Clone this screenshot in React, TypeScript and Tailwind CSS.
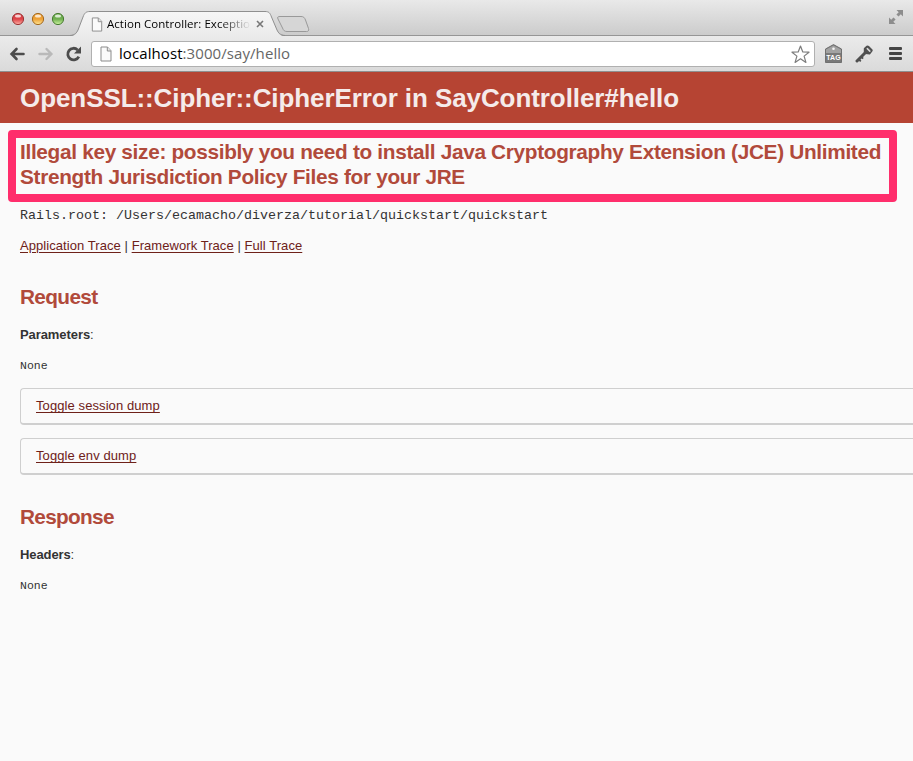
import React from "react";

const SANS = "font-['Liberation_Sans',Arial,sans-serif]";
const MONO = "font-['Liberation_Mono',monospace]";
const CHROME = "font-['Open_Sans',sans-serif]";

function PageIcon({ className }: { className: string }) {
  return (
    <svg className={className} viewBox="0 0 12 16" fill="none">
      <path d="M1 1h6.5L11 4.700V15H1z" fill="#fafafa" stroke="#8b8b8b" />
      <path d="M7.300 1v4H11" fill="#e8e8e8" stroke="#8b8b8b" />
    </svg>
  );
}

function TrafficLights() {
  const lights = [
    { id: "close", edge: "#9b3536", mid: "#dc4247", low: "#ffb0a5" },
    { id: "min", edge: "#a4691e", mid: "#eda035", low: "#ffe795" },
    { id: "max", edge: "#477b32", mid: "#6fae50", low: "#cdf5a0" },
  ];
  return (
    <svg className="ml-[11px] mt-[12px] h-[14px] w-[54px] shrink-0" viewBox="0 0 54 14">
      <defs>
        {lights.map((l) => (
          <linearGradient key={l.id} id={l.id} x1="0" y1="0" x2="0" y2="1">
            <stop offset="0" stopColor={l.mid} />
            <stop offset=".5" stopColor={l.mid} />
            <stop offset="1" stopColor={l.low} />
          </linearGradient>
        ))}
      </defs>
      {lights.map((l, i) => (
        <g key={l.id}>
          <circle cx={7 + i * 20} cy="7" r="5.6" fill={`url(#${l.id})`} stroke={l.edge} strokeWidth="1" />
          <ellipse cx={7 + i * 20} cy="4" rx="3" ry="1.6" fill="#fff" opacity=".75" />
        </g>
      ))}
    </svg>
  );
}

function TabStrip() {
  return (
    <div className="relative flex h-[36px] bg-gradient-to-b from-[#e9e9e9] to-[#cbcbcb]">
      <svg className="absolute inset-0 h-[36px] w-[913px]" viewBox="0 0 913 36" fill="none">
        <defs>
          <linearGradient id="tab" x1="0" y1="0" x2="0" y2="1">
            <stop offset="0" stopColor="#f6f6f6" />
            <stop offset="1" stopColor="#ebebeb" />
          </linearGradient>
        </defs>
        <path d="M0 35.5H913" stroke="#969696" />
        <path d="M72 36C76 35 77 33 78 30L83 17C84.500 13 86 11.500 90 11.500H265C269 11.500 270 13 271.500 17L277 30C278 33 279 35 283 36Z" fill="url(#tab)" />
        <path d="M70 35.500C75 35 76.500 33 78 30L83 17C84.500 13 86 11.500 90 11.500H265C269 11.500 270 13 271.500 17L277 30C278.500 33 280 35 285 35.500" stroke="#8f8f8f" />
        <path d="M280 16.500H301C303.500 16.500 304.500 17.500 305.500 20L308.500 28.500C309 30.500 308.500 31.500 306.500 31.500H287C284.500 31.500 283.500 30.500 282.500 28L278 19C277 17 278 16.500 280 16.500Z" fill="#d6d6d6" stroke="#999" />
      </svg>
      <TrafficLights />
      <div className="relative ml-[26px] mt-[16px] flex h-[16px] w-[176px] items-center">
        <PageIcon className="h-[15px] w-[12px] shrink-0" />
        <div className={`${CHROME} ml-[4px] w-[144px] shrink-0 overflow-hidden whitespace-nowrap bg-gradient-to-r from-black from-[78%] to-transparent bg-clip-text text-[11.5px] leading-[16px] tracking-[0.04px] text-transparent`}>
          Action Controller: Exceptio
        </div>
        <svg className="ml-[5px] h-[8px] w-[8px] shrink-0" viewBox="0 0 8 8">
          <path d="M1 1l6 6M7 1L1 7" stroke="#777" strokeWidth="1.600" />
        </svg>
      </div>
      <svg className="relative ml-auto mr-[9px] mt-[9px] h-[16px] w-[16px]" viewBox="0 0 16 16" fill="#8d8d8d">
        <path d="M8.500 1H15v6.500l-2.200-2.200-2.300 2.300-2.100-2.100 2.300-2.300z" />
        <path d="M1 8.500l2.200 2.200 2.300-2.300 2.100 2.100-2.300 2.300L7.500 15H1z" />
      </svg>
    </div>
  );
}

function Toolbar() {
  return (
    <div className="flex h-[36px] items-center border-b border-[#8f8f8f] bg-gradient-to-b from-[#ebebeb] to-[#dadada]">
      <svg className="ml-[9px] h-[16px] w-[17px] shrink-0" viewBox="0 0 17 16" fill="none" stroke="#4c4c4c" strokeWidth="2.600" strokeLinecap="round">
        <path d="M7.500 3L2.600 8l4.900 5M3 8H14.500" />
      </svg>
      <svg className="ml-[11px] h-[16px] w-[17px] shrink-0" viewBox="0 0 17 16" fill="none" stroke="#b9b9b9" strokeWidth="2.400" strokeLinecap="round">
        <path d="M9.500 3l4.900 5-4.900 5M14 8H2.500" />
      </svg>
      <svg className="ml-[11px] h-[16px] w-[17px] shrink-0" viewBox="0 0 17 16">
        <path d="M13.800 10.600A5.800 5.800 0 1 1 12.600 3.900" fill="none" stroke="#4c4c4c" strokeWidth="2.800" />
        <path d="M16 0.500V7.500H9z" fill="#4c4c4c" />
      </svg>
      <div className="ml-[9px] mt-[1px] flex h-[26px] w-[724px] shrink-0 items-center rounded-[3px] border border-[#b0b0b0] bg-white">
        <PageIcon className="ml-[8px] h-[16px] w-[12px] shrink-0" />
        <div className={`${CHROME} mb-[2px] ml-[7px] whitespace-nowrap text-[15px] leading-[20px] tracking-[0.08px] text-[#666]`}>
          <span className="text-black">localhost</span>:3000/say/hello
        </div>
        <svg className="ml-auto mr-[4px] h-[19px] w-[19px]" viewBox="0 0 19 19" fill="#fff" stroke="#7d7d7d" strokeWidth="1.200" strokeLinejoin="round">
          <path d="M9.500 1l2.300 6 6.200.200-4.900 3.900 1.800 6.300-5.400-3.600-5.400 3.600 1.800-6.300L1 7.200 7.200 7z" />
        </svg>
      </div>
      <svg className="ml-[10px] h-[19px] w-[17px] shrink-0" viewBox="0 0 17 19">
        <path d="M0.500 5L8.500 0.600 16.500 5V18.500H0.500z" fill="#797979" stroke="#707070" />
        <path d="M1 5.500L8.500 1.500 16 5.500V9H1z" fill="#a2a2a2" />
        <circle cx="8.500" cy="4.800" r="1.300" fill="#f4f4f4" />
        <text x="8.500" y="16.200" textAnchor="middle" fontFamily="Liberation Sans" fontWeight="700" fontSize="7" fill="#fff">TAG</text>
      </svg>
      <svg className="ml-[13px] h-[18px] w-[18px] shrink-0" viewBox="0 0 18 18" fill="none" stroke="#505050">
        <path d="M10.500 7.500L2 16" strokeWidth="3" strokeLinecap="round" />
        <path d="M4 14.500l1.800 1.800M6.500 12l1.600 1.600" strokeWidth="1.800" />
        <path d="M9.500 3.500L12 1.400q.8-.5 1.500.100L16.700 4.700q.6.700 0 1.400L14.600 8.700l-4.200-.4q-.8-.1-.9-.9z" fill="#505050" strokeWidth="1.400" strokeLinejoin="round" />
        <path d="M12.300 3.600l2.500 2.500" stroke="#d8d8d8" strokeWidth="1.500" strokeLinecap="round" />
      </svg>
      <svg className="ml-[16px] h-[13px] w-[13px] shrink-0" viewBox="0 0 13 13" fill="#454545">
        <rect width="13" height="3" rx="1" />
        <rect y="5" width="13" height="3" rx="1" />
        <rect y="10" width="13" height="3" rx="1" />
      </svg>
    </div>
  );
}

function TraceLink({ children }: { children: React.ReactNode }) {
  return <a className="text-[#6e2119] underline underline-offset-[2px]">{children}</a>;
}

function Dump({ label }: { label: string }) {
  return (
    <div className="ml-[20px] flex h-[37px] items-center rounded-l-[4px] border border-b-2 border-r-0 border-[#cfcfcf] pl-[15px] text-[13px] tracking-[0.09px]">
      <TraceLink>{label}</TraceLink>
    </div>
  );
}

export default function App() {
  return (
    <div className={`${SANS} h-[761px] w-[913px] overflow-hidden bg-[#fafafa] text-[#333]`}>
      <TabStrip />
      <Toolbar />
      <header className="flex h-[51px] items-center bg-[#b64433] pl-[20px]">
        <h1 className="whitespace-nowrap text-[26px] font-bold leading-[30px] tracking-[-0.08px] text-[#f5ebea]">
          OpenSSL::Cipher::CipherError in SayController#hello
        </h1>
      </header>
      <div className="ml-[8px] mt-[7px] h-[72px] w-[889px] rounded-[4px] border-8 border-[#ff2e6c] pl-[4px] pt-[1px]">
        <h2 className="whitespace-nowrap text-[20.8px] font-bold leading-[25px] tracking-[-0.32px] text-[#b14a3b]">
          <div>Illegal key size: possibly you need to install Java Cryptography Extension (JCE) Unlimited</div>
          <div>Strength Jurisdiction Policy Files for your JRE</div>
        </h2>
      </div>
      <div className={`${MONO} ml-[20px] mt-[5px] h-[18px] whitespace-nowrap text-[13.333px] leading-[18px]`}>
        Rails.root: /Users/ecamacho/diverza/tutorial/quickstart/quickstart
      </div>
      <div className="ml-[20px] mt-[12px] h-[18px] whitespace-nowrap text-[13px] leading-[18px] tracking-[0.065px]">
        <TraceLink>Application Trace</TraceLink> | <TraceLink>Framework Trace</TraceLink> | <TraceLink>Full Trace</TraceLink>
      </div>
      <h2 className="ml-[20px] mt-[29px] text-[20.8px] font-bold leading-[25px] tracking-[-0.65px] text-[#b14a3b]">Request</h2>
      <p className="ml-[20px] mt-[17px] text-[13px] leading-[18px] tracking-[-0.08px]"><b>Parameters</b>:</p>
      <pre className={`${MONO} mb-[13px] ml-[20px] mt-[13px] text-[11.5px] leading-[18px]`}>None</pre>
      <Dump label="Toggle session dump" />
      <div className="h-[13px]" />
      <Dump label="Toggle env dump" />
      <h2 className="ml-[20px] mt-[29px] text-[20.8px] font-bold leading-[25px] tracking-[-0.7px] text-[#b14a3b]">Response</h2>
      <p className="ml-[20px] mt-[17px] text-[13px] leading-[18px] tracking-[-0.1px]"><b>Headers</b>:</p>
      <pre className={`${MONO} ml-[20px] mt-[13px] text-[11.5px] leading-[18px]`}>None</pre>
    </div>
  );
}
